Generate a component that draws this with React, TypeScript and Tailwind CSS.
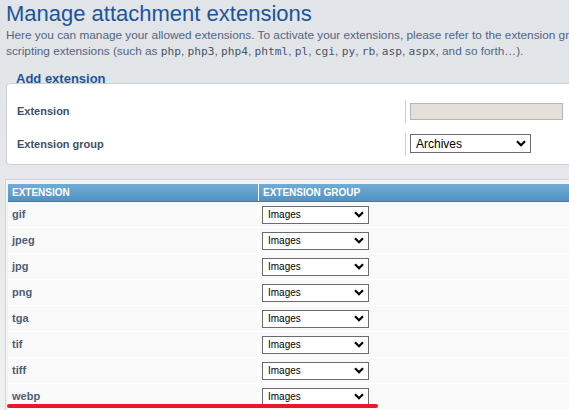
import React from 'react';

const extensions = ['gif', 'jpeg', 'jpg', 'png', 'tga', 'tif', 'tiff', 'webp'];
const codeWords = ['php', 'php3', 'php4', 'phtml', 'pl', 'cgi', 'py', 'rb', 'asp', 'aspx'];

const Chevron = () => (
  <svg width="10" height="7" viewBox="0 0 10 7" className="shrink-0">
    <path d="M1 1.2 L5 5.2 L9 1.2" fill="none" stroke="#000" strokeWidth="2.2" />
  </svg>
);

const FakeSelect: React.FC<{ value: string; className: string; textClass: string }> = ({
  value,
  className,
  textClass,
}) => (
  <div
    className={`flex items-center justify-between bg-white border border-[#6b6b6b] pl-[5px] pr-[4px] ${className}`}
  >
    <span className={`text-black ${textClass}`}>{value}</span>
    <Chevron />
  </div>
);

export default function App() {
  return (
    <div className="relative w-[569px] h-[410px] overflow-hidden bg-[#f1f1f1] font-['Liberation_Sans',Arial,sans-serif]">
      <div className="bg-gradient-to-b from-[#e1e4e8] via-[#e6e8ea] to-[#f1f1f1]">
        <div className="w-[800px] pl-[6px]">
          <h1 className="text-[22px] leading-[27px] text-[#1a559c]">Manage attachment extensions</h1>
          <p className="text-[11.8px] leading-[16px] text-[#536482] whitespace-nowrap">
            Here you can manage your allowed extensions. To activate your extensions, please refer to the
            extension groups management panel. We strongly recommend not to allow
            <br />
            scripting extensions (such as{' '}
            {codeWords.map((w) => (
              <React.Fragment key={w}>
                <code className="font-['DejaVu_Sans_Mono',monospace] text-[11.2px] text-[#4a5568]">{w}</code>,{' '}
              </React.Fragment>
            ))}
            and so forth…).
          </p>

          <div className="mt-[11px] pl-[10px] text-[13px] leading-[16px] font-bold text-[#1a559c]">
            Add extension
          </div>
          <div className="-mt-[4px] bg-white border border-[#cfcfcf] rounded-[4px] pt-[16px] pb-[8px] flex flex-col gap-[10px]">
            <div className="flex h-[23px]">
              <div className="w-[398px] pl-[10px] flex items-center text-[11px] font-bold text-[#425067]">
                Extension
              </div>
              <div className="border-l border-[#cfcfcf] pl-[4px] flex items-center">
                <div className="w-[153px] h-[17px] bg-[#e3e0d9] border border-[#b5b5b5]" />
              </div>
            </div>
            <div className="flex h-[23px]">
              <div className="w-[398px] pl-[10px] flex items-center text-[11px] font-bold text-[#425067]">
                Extension group
              </div>
              <div className="border-l border-[#cfcfcf] pl-[4px] flex items-start pt-[1px]">
                <FakeSelect value="Archives" className="w-[121px] h-[19px]" textClass="text-[12px]" />
              </div>
            </div>
          </div>

          <div className="mt-[14px] -ml-[1px] border border-[#d4d4d4] bg-[#f3f3f3] pt-[4px] pl-[2px]">
            <div className="flex h-[18px] bg-gradient-to-b from-[#70acd5] to-[#5193c4] border-b border-[#3a7db3] text-[10px] font-bold text-white uppercase">
              <div className="w-[251px] pl-[4px] flex items-center border-r border-white">Extension</div>
              <div className="flex-1 pl-[4px] flex items-center">Extension group</div>
            </div>
            {extensions.map((ext) => (
              <div key={ext} className="flex h-[26px] bg-[#f9f9f9] border-b border-white">
                <div className="w-[251px] pl-[4px] flex items-center border-r border-white text-[11px] font-bold text-[#4c5d77]">
                  {ext}
                </div>
                <div className="flex-1 pl-[3px] flex items-center">
                  <FakeSelect value="Images" className="w-[107px] h-[18px]" textClass="text-[10px]" />
                </div>
              </div>
            ))}
          </div>
        </div>
      </div>
      <div className="absolute left-[7px] top-[404px] w-[371px] h-[4px] rounded-full bg-[#e81a2a]" />
    </div>
  );
}
